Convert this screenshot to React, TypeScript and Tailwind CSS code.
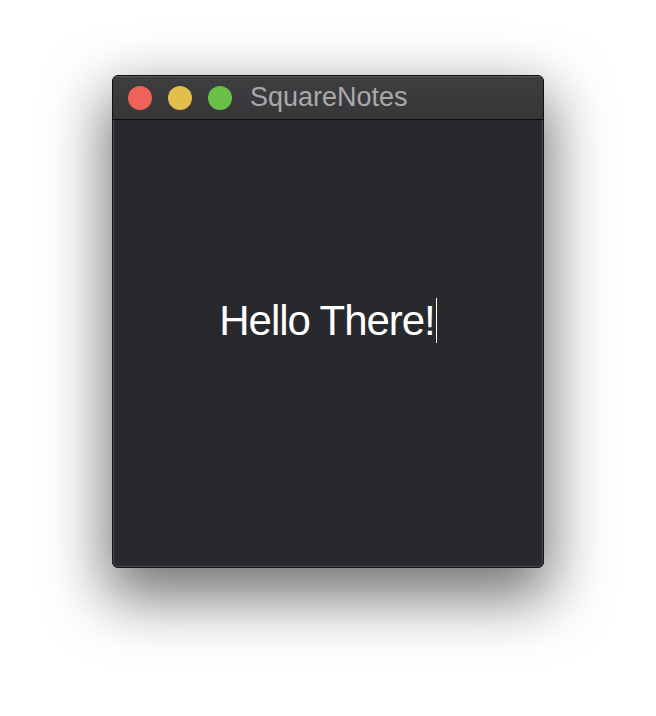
export default function App() {
  return (
    <div className="min-h-[716px] w-full bg-white pt-[75px]">
      <div className="mx-auto flex h-[493px] w-[432px] flex-col overflow-hidden rounded-[6px] border border-[#111113] bg-[#28292d] shadow-[0_24px_60px_6px_rgba(0,0,0,0.55),inset_0_0_0_1px_rgba(255,255,255,0.18)]">
        <div className="flex h-[44px] shrink-0 items-center border-b border-[#0e0e10] bg-gradient-to-b from-[#3e3e41] to-[#37373a] pl-[15px] shadow-[inset_0_1px_0_rgba(255,255,255,0.14)]">
          <div className="flex items-center gap-[16px]">
            <span className="h-[24px] w-[24px] rounded-full bg-[#ee6259]" />
            <span className="h-[24px] w-[24px] rounded-full bg-[#e2bf4c]" />
            <span className="h-[24px] w-[24px] rounded-full bg-[#6abf48]" />
          </div>
          <span className="ml-[18px] font-['Liberation_Sans',Arial,sans-serif] text-[27px] leading-none text-[#a9a9ac]">
            SquareNotes
          </span>
        </div>
        <div className="flex flex-1 items-start justify-center pt-[178px]">
          <div className="flex items-center">
            <span className="font-['Liberation_Sans',Arial,sans-serif] text-[42px] leading-none tracking-[-0.025em] text-white">
              Hello There!
            </span>
            <span className="ml-[1px] h-[45px] w-[1px] bg-white" />
          </div>
        </div>
      </div>
    </div>
  );
}
